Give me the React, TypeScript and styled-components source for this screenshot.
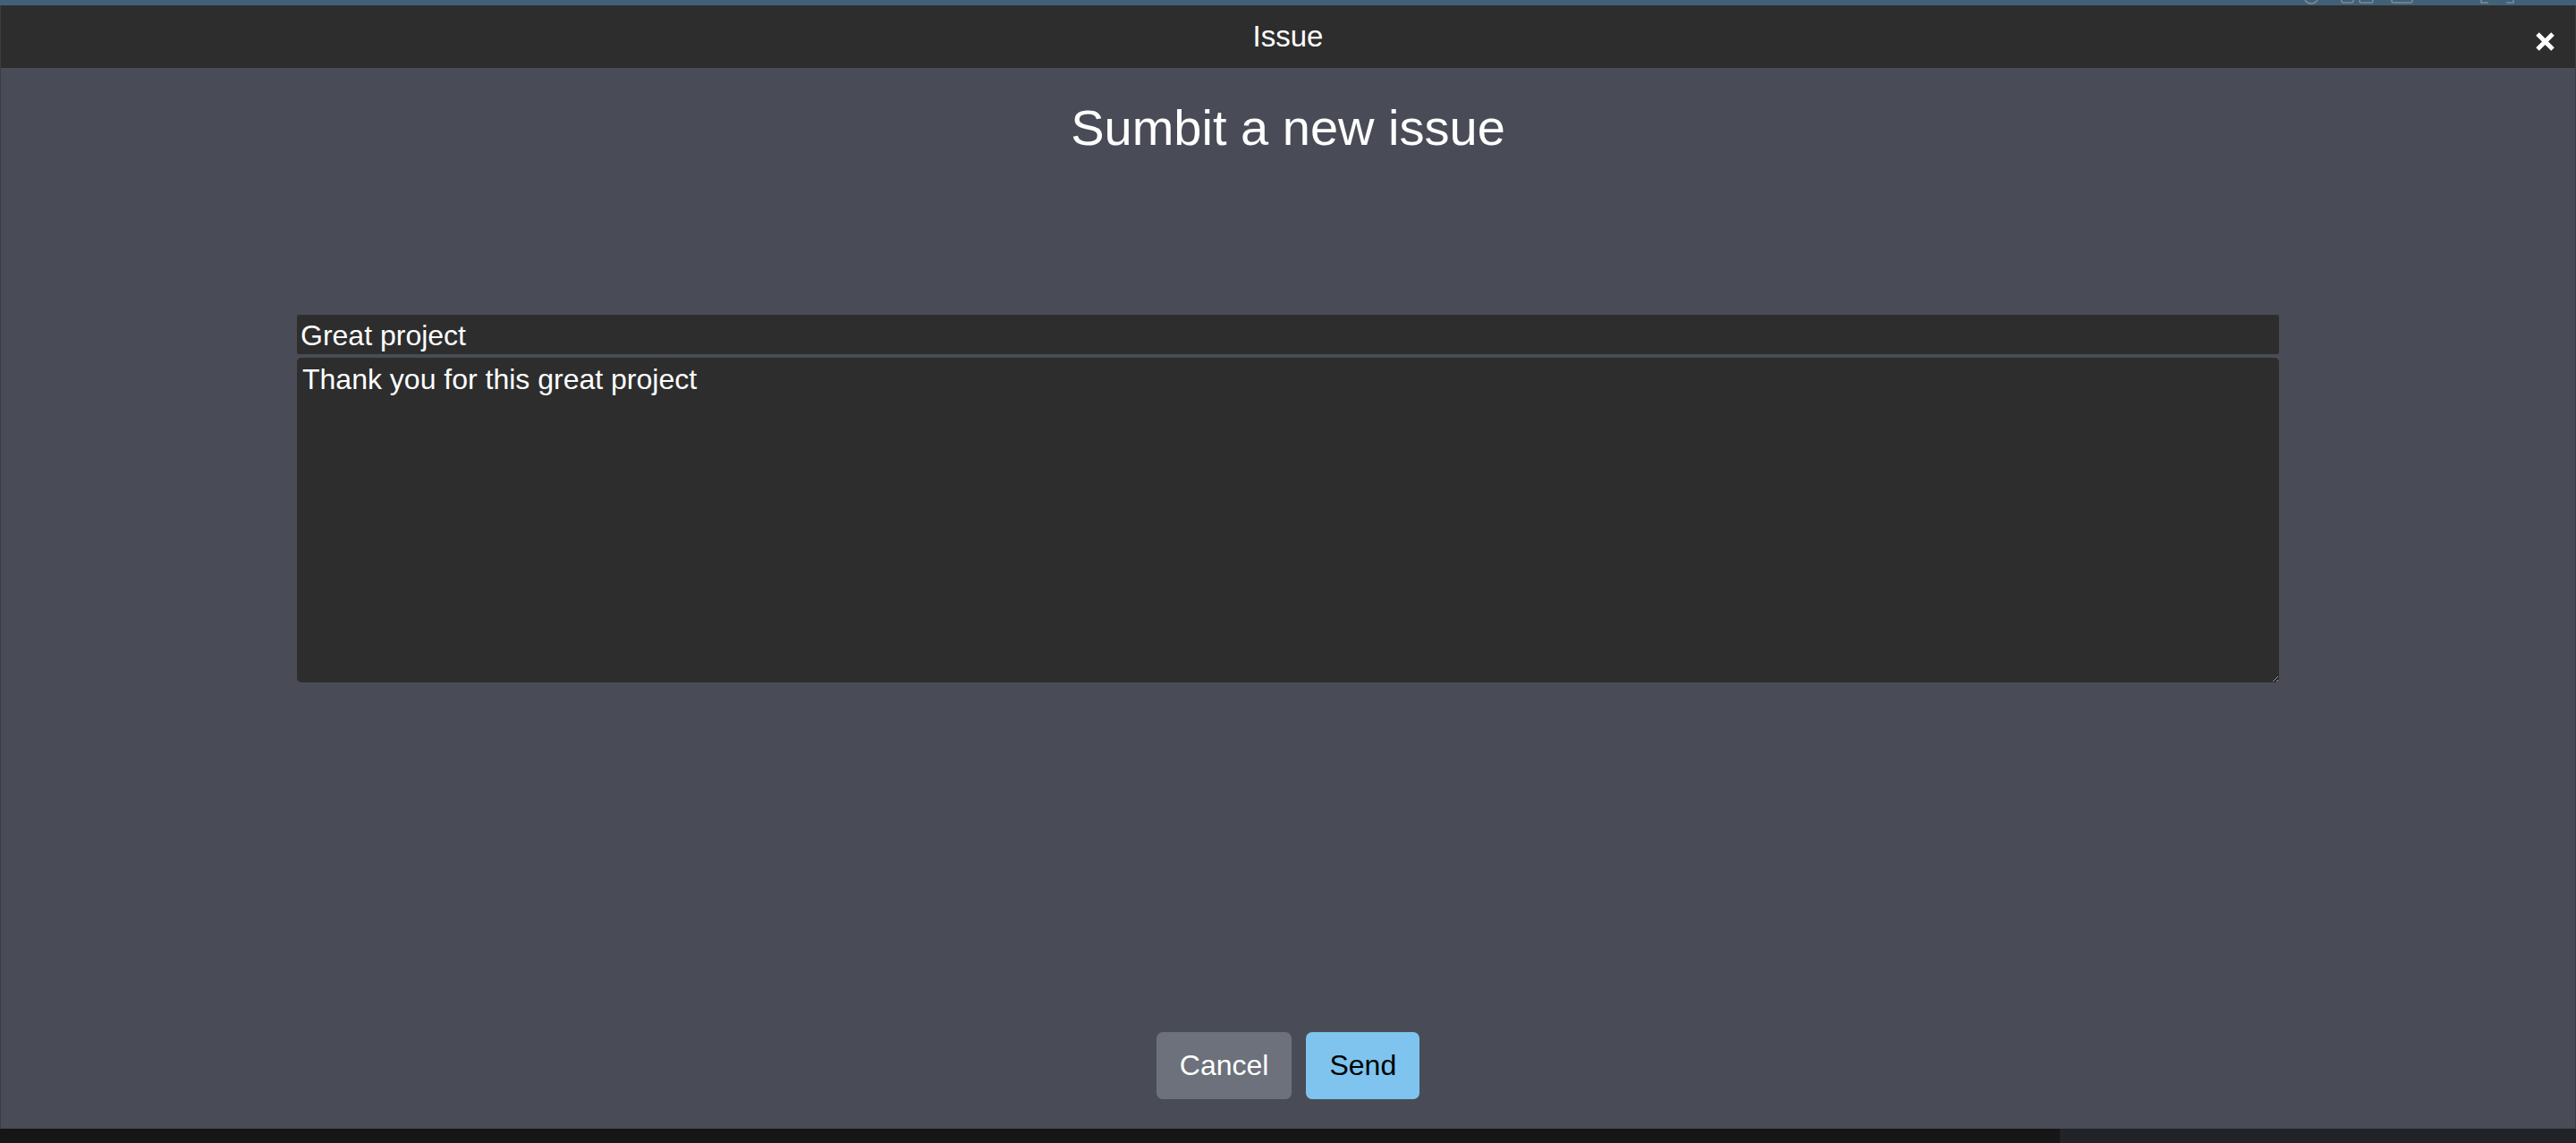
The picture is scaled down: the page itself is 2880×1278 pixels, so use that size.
import React, { useEffect, useRef } from "react";
import styled, { createGlobalStyle } from "styled-components";

const GlobalStyle = createGlobalStyle`
  html, body {
    margin: 0;
    padding: 0;
    background: #494c56;
  }
  body {
    font-family: "Liberation Sans", Arial, Helvetica, sans-serif;
  }
  * { box-sizing: border-box; }
`;

const Page = styled.div`
  display: flex;
  flex-direction: column;
  height: 1278px;
  width: 100%;
`;

const TopStrip = styled.div`
  height: 6px;
  flex: none;
  background: #416179;
  display: flex;
  justify-content: flex-end;
  padding-right: 60px;
  overflow: hidden;
`;

const Modal = styled.div`
  flex: 1;
  display: flex;
  flex-direction: column;
  border-left: 1px solid #3c3e44;
  border-right: 1px solid #3c3e44;
`;

const Header = styled.header`
  height: 70px;
  flex: none;
  background: #2d2d2d;
  display: grid;
  grid-template-columns: 1fr auto 1fr;
  align-items: center;
`;

const HeaderTitle = styled.div`
  grid-column: 2;
  color: #ffffff;
  font-size: 33px;
  line-height: normal;
`;

const CloseButton = styled.button`
  grid-column: 3;
  justify-self: end;
  margin-right: 22px;
  margin-top: 10px;
  width: 23px;
  height: 23px;
  padding: 0;
  border: none;
  background: transparent;
  cursor: pointer;
  display: flex;
`;

const Body = styled.main`
  flex: 1;
  background: #494c56;
  display: flex;
  flex-direction: column;
  align-items: center;
  padding-bottom: 33px;
`;

const Title = styled.h1`
  margin: 34px 0 0;
  font-size: 56px;
  font-weight: normal;
  line-height: normal;
  color: #ffffff;
`;

const Form = styled.form`
  margin-top: 177px;
  width: 2216px;
  display: flex;
  flex-direction: column;
  gap: 4px;
`;

const TextInput = styled.input`
  height: 44px;
  width: 100%;
  background: #2d2d2d;
  border: none;
  border-radius: 3px;
  outline: none;
  color: #ffffff;
  caret-color: #ffffff;
  font-family: "Liberation Sans", Arial, Helvetica, sans-serif;
  font-size: 32px;
  padding: 2px 4px 0;
`;

const TextArea = styled.textarea`
  height: 363px;
  width: 100%;
  background: #2d2d2d;
  border: none;
  border-radius: 5px;
  outline: none;
  color: #ffffff;
  color-scheme: dark;
  font-family: "Liberation Sans", Arial, Helvetica, sans-serif;
  font-size: 32px;
  line-height: normal;
  padding: 6px 6px;
  resize: vertical;
`;

const Spacer = styled.div`
  flex: 1;
`;

const Actions = styled.div`
  display: flex;
  gap: 16px;
`;

const ActionButton = styled.button<{ $primary?: boolean }>`
  height: 75px;
  padding: 0 26px;
  border: none;
  border-radius: 7px;
  font-family: "Liberation Sans", Arial, Helvetica, sans-serif;
  font-size: 32px;
  cursor: pointer;
  background: ${(p) => (p.$primary ? "#7ec4ee" : "#6c717b")};
  color: ${(p) => (p.$primary ? "#000000" : "#ffffff")};
`;

const BottomStrip = styled.div`
  height: 16px;
  flex: none;
  display: grid;
  grid-template-columns: 2303px 1fr;
`;

const BottomPane = styled.div<{ $tone: string }>`
  background: ${(p) => p.$tone};
`;

const StripIcons = () => (
  <svg width="260" height="6" viewBox="0 0 260 6" fill="none" stroke="#7d8a94" strokeWidth="1.6">
    <circle cx="24" cy="-4" r="8" />
    <rect x="58" y="-14" width="13" height="17" rx="2" />
    <rect x="78" y="-14" width="15" height="17" rx="2" />
    <rect x="114" y="-10" width="23" height="13" rx="2" />
    <path d="M214 -4 V3 H222" />
    <path d="M242 3 H250 V-4" />
  </svg>
);

const CloseIcon = () => (
  <svg width="23" height="23" viewBox="0 0 23 23">
    <path d="M3 3 L20 20 M20 3 L3 20" stroke="#ffffff" strokeWidth="5" strokeLinecap="butt" />
  </svg>
);

export default function App() {
  const inputRef = useRef<HTMLInputElement>(null);

  useEffect(() => {
    const el = inputRef.current;
    if (el) {
      el.focus();
      el.setSelectionRange(5, 5);
    }
  }, []);

  return (
    <>
      <GlobalStyle />
      <Page>
        <TopStrip>
          <StripIcons />
        </TopStrip>
        <Modal>
          <Header>
            <HeaderTitle>Issue</HeaderTitle>
            <CloseButton type="button" aria-label="Close">
              <CloseIcon />
            </CloseButton>
          </Header>
          <Body>
            <Title>Sumbit a new issue</Title>
            <Form onSubmit={(e) => e.preventDefault()}>
              <TextInput ref={inputRef} type="text" defaultValue="Great project" />
              <TextArea defaultValue="Thank you for this great project" />
            </Form>
            <Spacer />
            <Actions>
              <ActionButton type="button">Cancel</ActionButton>
              <ActionButton type="button" $primary>
                Send
              </ActionButton>
            </Actions>
          </Body>
        </Modal>
        <BottomStrip>
          <BottomPane $tone="#161616" />
          <BottomPane $tone="#222328" />
        </BottomStrip>
      </Page>
    </>
  );
}
